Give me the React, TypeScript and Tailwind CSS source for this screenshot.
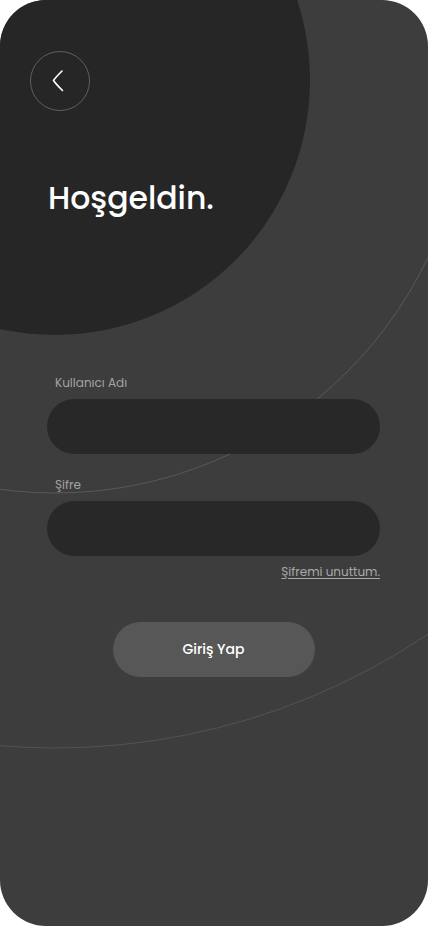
import React from "react";

const BackIcon = () => (
  <svg width="14" height="24" viewBox="0 0 14 24" fill="none">
    <path
      d="M11 2 C7 6 4 9 2.5 11.5 C4 14 7 17 11.5 21.5"
      stroke="white"
      strokeWidth="1.6"
      strokeLinecap="round"
      strokeLinejoin="round"
    />
  </svg>
);

const Field = ({ label, top }: { label: string; top: string }) => (
  <div className={`flex flex-col ${top}`}>
    <label className="ml-2 text-[12px] leading-[16px] text-[#a3a3a3]">{label}</label>
    <input className="mt-2 h-[55px] w-full rounded-full bg-[#282828] px-6 text-sm text-white outline-none" />
  </div>
);

export default function App() {
  return (
    <div className="min-h-[926px] bg-white">
      <div className="relative h-[926px] w-[428px] overflow-hidden rounded-[46px] bg-[#3d3d3d] font-['Poppins','Inter',sans-serif]">
        {/* background rings */}
        <svg className="absolute inset-0" width="428" height="926" viewBox="0 0 428 926" fill="none">
          <circle cx="55" cy="80" r="668" stroke="#535353" strokeWidth="1" />
          <circle cx="55" cy="80" r="413" stroke="#595959" strokeWidth="1" />
          <circle cx="55" cy="80" r="255" fill="#262626" />
        </svg>

        <div className="relative flex flex-col">
          <button className="ml-[30px] mt-[51px] flex h-[60px] w-[60px] items-center justify-center rounded-full border border-[#5f5f5f] pr-1">
            <BackIcon />
          </button>

          <h1 className="ml-[48px] mt-[72px] text-[31.5px] font-medium leading-none text-white">
            Hoşgeldin.
          </h1>

          <div className="ml-[47px] mr-[48px] flex flex-col">
            <Field label="Kullanıcı Adı" top="mt-[160px]" />
            <Field label="Şifre" top="mt-[23px]" />
            <a className="mt-2 self-end text-[12px] leading-[16px] text-[#a8a8a8] underline underline-offset-2">
              Şifremi unuttum.
            </a>
            <button className="mt-[42px] h-[55px] w-[202px] self-center rounded-full bg-[#575757] text-[14px] font-medium text-white">
              Giriş Yap
            </button>
          </div>
        </div>
      </div>
    </div>
  );
}
